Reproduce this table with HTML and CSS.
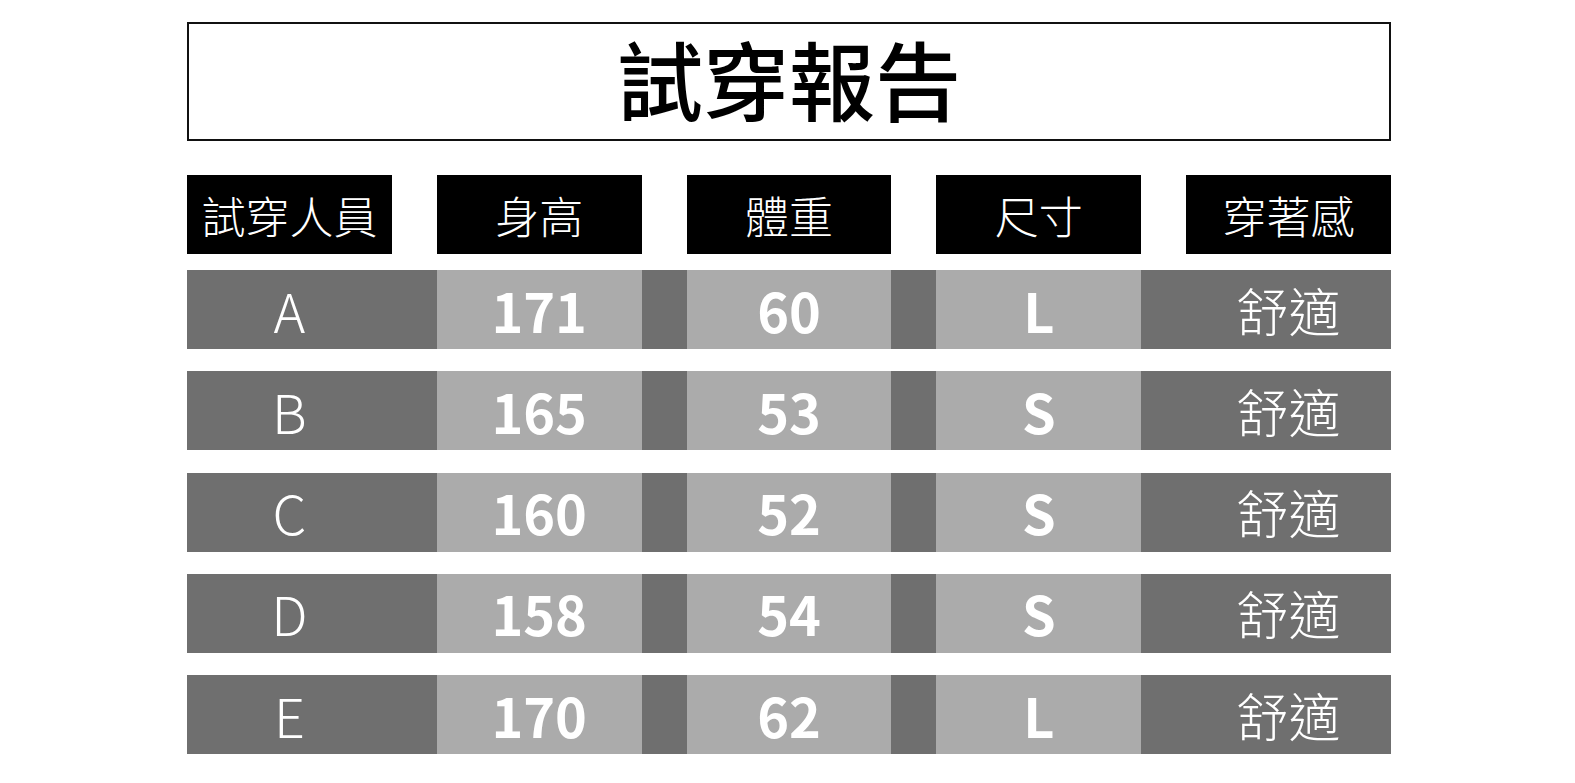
FILE: index.html
```html
<!DOCTYPE html>
<html lang="zh-Hant">
<head>
<meta charset="utf-8">
<title>試穿報告</title>
<link rel="stylesheet" href="styles.css">
</head>
<body>
<main class="page">
  <h1 class="title">試穿報告</h1>
  <div class="grid head">
    <div class="hcell">試穿人員</div>
    <div class="hcell">身高</div>
    <div class="hcell">體重</div>
    <div class="hcell">尺寸</div>
    <div class="hcell">穿著感</div>
  </div>
  <div class="rows">
    <div class="grid row"><div class="cell name">A</div><div class="cell num">171</div><div class="cell num">60</div><div class="cell num">L</div><div class="cell feel">舒適</div></div>
    <div class="grid row"><div class="cell name">B</div><div class="cell num">165</div><div class="cell num">53</div><div class="cell num">S</div><div class="cell feel">舒適</div></div>
    <div class="grid row"><div class="cell name">C</div><div class="cell num">160</div><div class="cell num">52</div><div class="cell num">S</div><div class="cell feel">舒適</div></div>
    <div class="grid row"><div class="cell name">D</div><div class="cell num">158</div><div class="cell num">54</div><div class="cell num">S</div><div class="cell feel">舒適</div></div>
    <div class="grid row"><div class="cell name">E</div><div class="cell num">170</div><div class="cell num">62</div><div class="cell num">L</div><div class="cell feel">舒適</div></div>
  </div>
</main>
</body>
</html>
```
FILE: styles.css
```css
html, body {
  margin: 0;
  padding: 0;
  background: #ffffff;
}
body {
  font-family: "Noto Sans CJK TC", "Noto Sans", sans-serif;
  color: #000;
}
.page {
  width: 1204px;
  margin: 0 0 0 187px;
  padding-top: 22px;
}
.title {
  box-sizing: border-box;
  height: 119px;
  margin: 0;
  border: 2px solid #111;
  display: flex;
  align-items: center;
  justify-content: center;
  font-size: 86px;
  font-weight: 500;
  line-height: 1;
  letter-spacing: 0;
  padding-bottom: 8px;
}
.grid {
  display: grid;
  grid-template-columns: repeat(5, 1fr);
  column-gap: 45px;
}
.head {
  margin-top: 34px;
}
.hcell {
  height: 79px;
  background: #000;
  color: #fff;
  display: flex;
  align-items: center;
  justify-content: center;
  font-size: 44px;
  font-weight: 300;
  line-height: 1;
}
.rows {
  margin-top: 16px;
  display: flex;
  flex-direction: column;
  gap: 22.3px;
}
.row {
  height: 79px;
  background: #6f6f6f;
}
.cell {
  display: flex;
  align-items: center;
  justify-content: center;
  color: #fff;
  line-height: 1;
}
.name {
  font-size: 54px;
  font-weight: 300;
}
.num {
  background: #ababab;
  font-size: 54px;
  font-weight: 700;
}
.feel {
  font-size: 52px;
  font-weight: 300;
}
```
